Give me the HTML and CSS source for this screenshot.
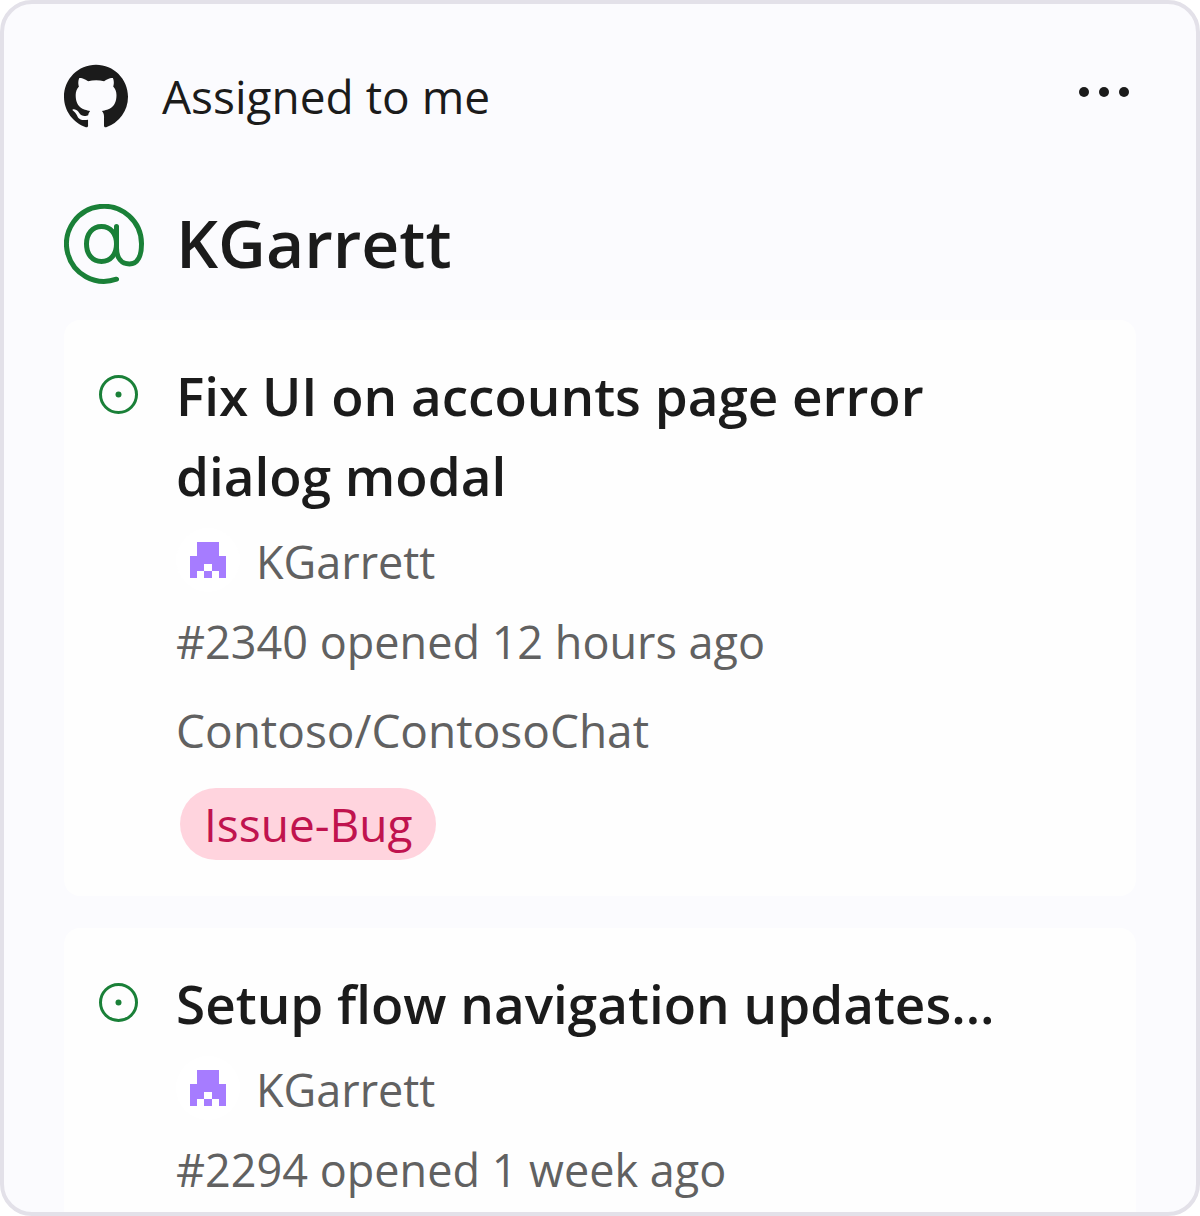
FILE: index.html
```html
<!DOCTYPE html>
<html lang="en">
<head>
<meta charset="utf-8">
<meta name="viewport" content="width=device-width, initial-scale=1">
<title>Assigned to me</title>
<link rel="stylesheet" href="styles.css">
</head>
<body>
<svg class="sprite" aria-hidden="true">
  <symbol id="avatar" viewBox="0 0 64 64">
    <path fill="#a67cff" fill-rule="evenodd" d="M21 14H43V28H50V50H43V43H36V50H28V43H21V50H14V28H21ZM28 36V43H36V36Z"/>
  </symbol>
  <symbol id="open-issue" viewBox="0 0 40 40">
    <circle cx="19.5" cy="19.5" r="18" fill="none" stroke="#1a8038" stroke-width="3"/>
    <circle cx="19.5" cy="19.5" r="3" fill="#1a8038"/>
  </symbol>
</svg>
<main class="widget">
  <header class="widget-header">
    <svg class="logo" viewBox="0 0 64 64" aria-hidden="true"><path transform="translate(0 .8) scale(4)" fill="#1b1b1b" d="M8 0C3.58 0 0 3.58 0 8c0 3.54 2.29 6.53 5.47 7.59.4.07.55-.17.55-.38 0-.19-.01-.82-.01-1.49-2.01.37-2.53-.49-2.69-.94-.09-.23-.48-.94-.82-1.13-.28-.15-.68-.52-.01-.53.63-.01 1.08.58 1.23.82.72 1.21 1.87.87 2.33.66.07-.52.28-.87.51-1.07-1.78-.2-3.64-.89-3.64-3.95 0-.87.31-1.59.82-2.15-.08-.2-.36-1.02.08-2.12 0 0 .67-.21 2.2.82.64-.18 1.32-.27 2-.27s1.36.09 2 .27c1.53-1.04 2.2-.82 2.2-.82.44 1.1.16 1.92.08 2.12.51.56.82 1.27.82 2.15 0 3.07-1.87 3.75-3.65 3.95.29.25.54.73.54 1.48 0 1.07-.01 1.93-.01 2.2 0 .21.15.46.55.38A8.01 8.01 0 0 0 16 8c0-4.42-3.58-8-8-8z"/></svg>
    <span class="widget-name">Assigned to me</span>
    <button class="more" type="button" aria-label="More options">
      <svg viewBox="0 0 64 64" aria-hidden="true"><g fill="#1b1b1b"><circle cx="12" cy="28" r="5"/><circle cx="32" cy="28" r="5"/><circle cx="52" cy="28" r="5"/></g></svg>
    </button>
  </header>
  <div class="account">
    <svg class="mention" viewBox="0 0 80 80" fill="none" stroke="#1a8038" stroke-width="5" stroke-linecap="round" stroke-linejoin="round" aria-hidden="true">
      <path d="M52.5 75.2A37.5 37.5 0 1 1 77.5 40C77.5 52 73.5 60 65.5 60C57.5 60 52.5 54 52.5 44V22.5"/>
      <path d="M52.5 40C52.5 50.5 46.5 57.5 37.5 57.5S22.5 50.5 22.5 40S28.5 22.5 37.5 22.5S52.5 29.5 52.5 40Z"/>
    </svg>
    <h1 class="account-name">KGarrett</h1>
  </div>
  <section class="issues">
    <article class="issue">
      <svg class="status" aria-hidden="true"><use href="#open-issue"/></svg>
      <div class="issue-body">
        <h2 class="issue-title">Fix UI on accounts page error dialog modal</h2>
        <div class="author"><svg class="avatar" aria-hidden="true"><use href="#avatar"/></svg><span>KGarrett</span></div>
        <p class="opened">#2340 opened 12 hours ago</p>
        <p class="repo">Contoso/ContosoChat</p>
        <span class="label">Issue-Bug</span>
      </div>
    </article>
    <article class="issue">
      <svg class="status" aria-hidden="true"><use href="#open-issue"/></svg>
      <div class="issue-body">
        <h2 class="issue-title">Setup flow navigation updates…</h2>
        <div class="author"><svg class="avatar" aria-hidden="true"><use href="#avatar"/></svg><span>KGarrett</span></div>
        <p class="opened">#2294 opened 1 week ago</p>
      </div>
    </article>
  </section>
</main>
</body>
</html>
```

FILE: styles.css
```css
* { box-sizing: border-box; margin: 0; }

body {
  background: #fff;
  color: #1b1b1b;
  font: 46px/64px "Open Sans", "Noto Sans", sans-serif;
}

.sprite { display: none; }
svg { display: block; flex: none; }

.widget {
  height: 100vh;
  overflow: hidden;
  padding: 60px;
  border: 4px solid #e3e1e9;
  border-radius: 32px;
  background: #fbfbfe;
}

.widget-header { display: flex; align-items: center; gap: 34px; }
.logo { width: 64px; height: 64px; overflow: visible; }
.widget-name { flex: 1; }
.more {
  width: 64px;
  height: 64px;
  padding: 0;
  border: 0;
  background: none;
}

.account {
  display: flex;
  align-items: flex-start;
  gap: 32px;
  margin-top: 76px;
}
.mention { width: 80px; height: 80px; }
.account-name { font-size: 66px; font-weight: 600; line-height: 76px; }

.issues { display: grid; gap: 32px; margin-top: 36px; }
.issue {
  display: flex;
  gap: 37px;
  padding: 36px 35px;
  border-radius: 16px;
  background: #fefefe;
}
.status { width: 40px; height: 40px; margin-top: 19px; }
.issue-body { flex: 1; min-width: 0; }
.issue-title {
  padding-right: 36px;
  font-size: 53px;
  font-weight: 600;
  line-height: 80px;
}

.author, .opened, .repo { color: #616161; line-height: 68px; }
.author, .opened { margin-top: 12px; font-size: 45px; }
.author { display: flex; align-items: flex-start; gap: 16px; }
.avatar { width: 64px; height: 64px; border-radius: 50%; background: #fff; }
.repo { margin-top: 20px; }
.label {
  display: block;
  width: fit-content;
  margin: 24px 4px 0;
  padding: 0 24px;
  border-radius: 36px;
  background: #ffd4de;
  color: #c0134e;
  line-height: 72px;
}
```
